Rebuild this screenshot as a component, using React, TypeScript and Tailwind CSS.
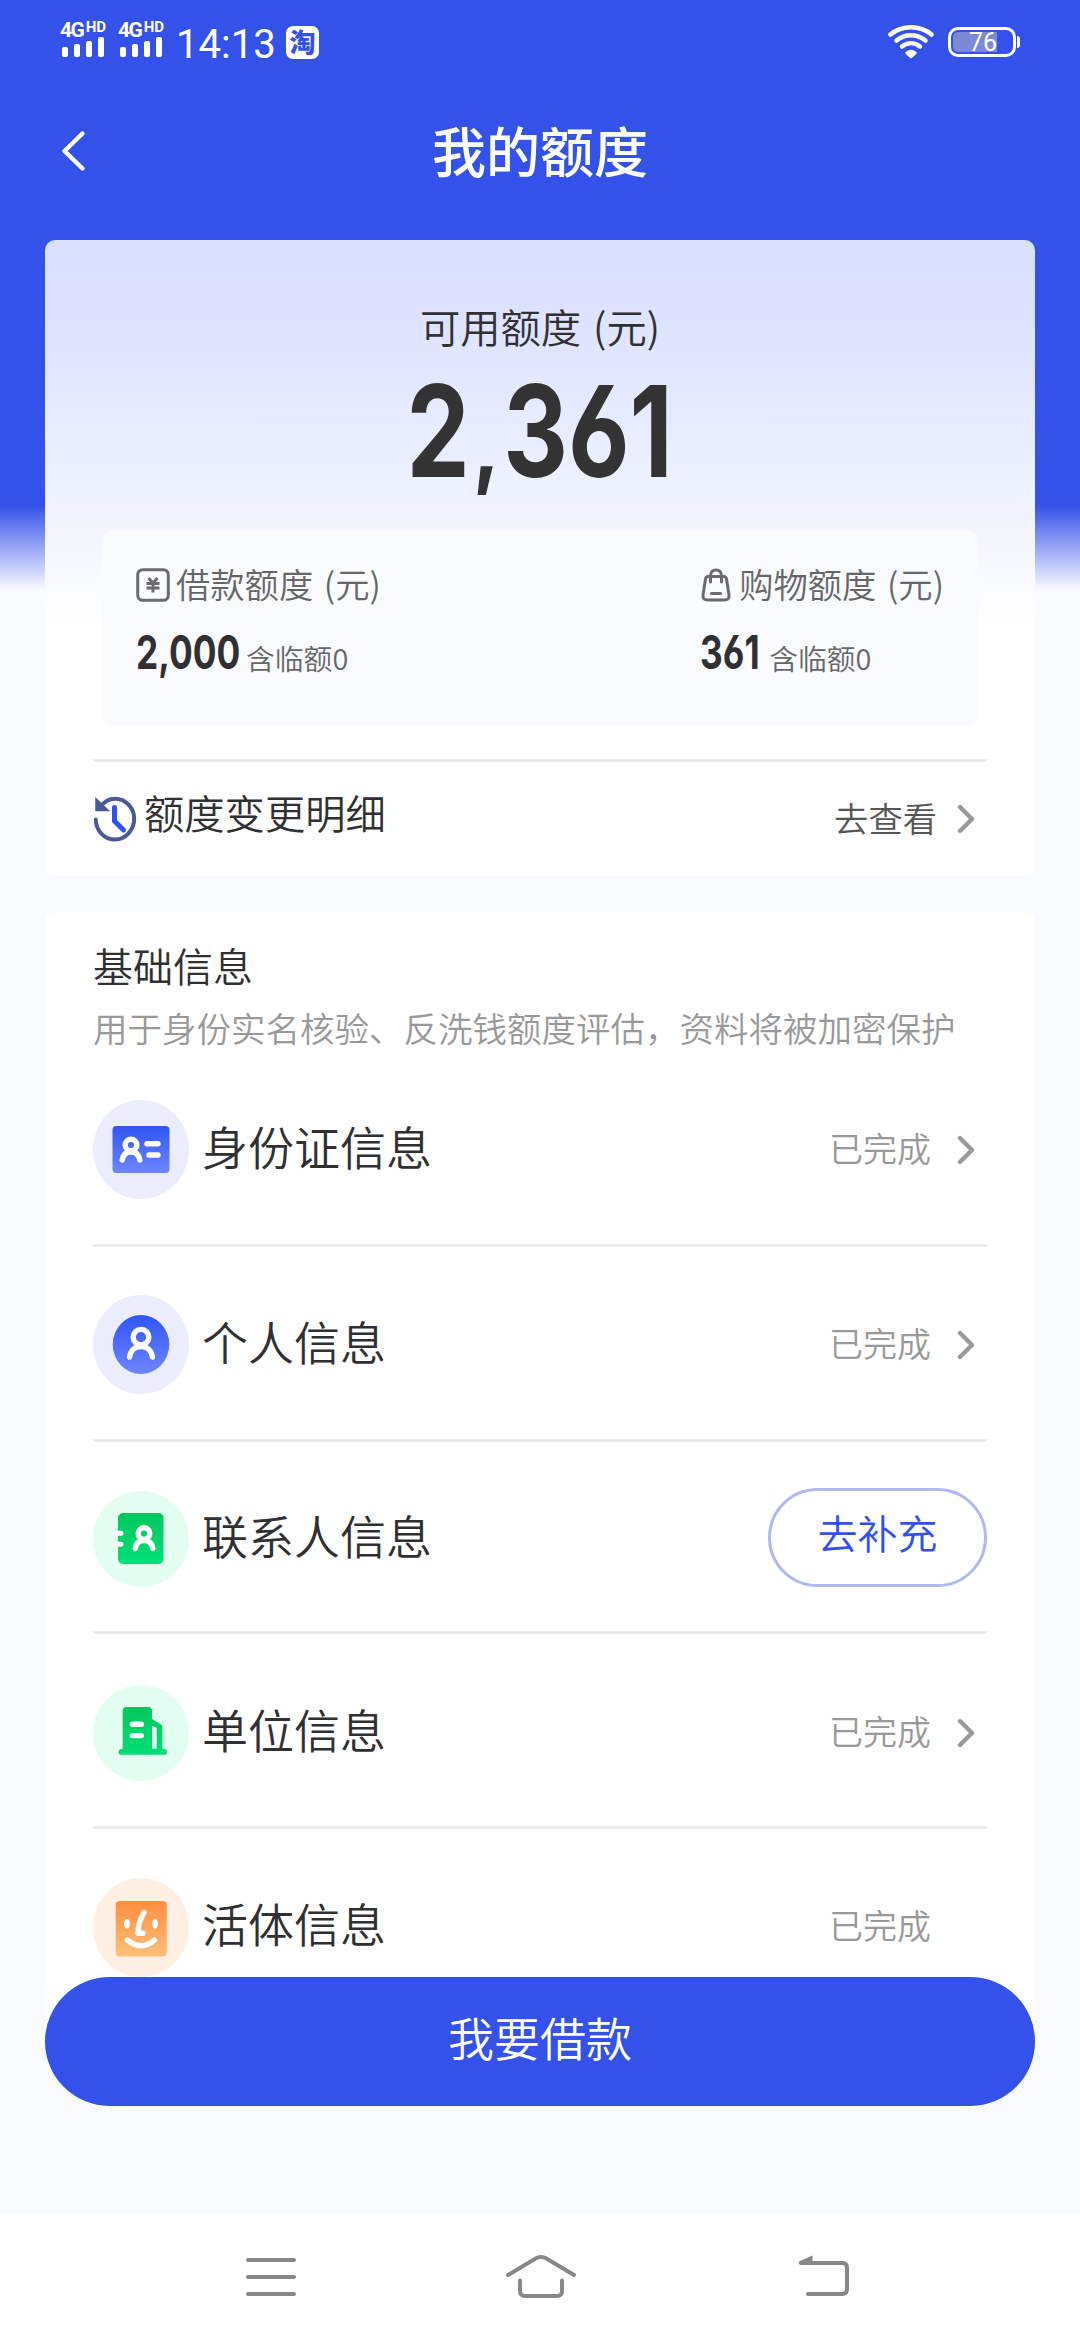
import type { ReactNode } from "react";

const FONT = "font-['Noto_Sans_CJK_SC',sans-serif]";

function Person({ x, y }: { x: number; y: number }) {
  return (
    <g
      transform={`translate(${x} ${y})`}
      fill="none"
      stroke="#fff"
      strokeWidth="5.4"
      strokeLinecap="round"
    >
      <circle r="5.8" />
      <path d="M-8.8 15C-8 9.5-4.5 7 0 7s8 2.5 8.800 8" />
    </g>
  );
}

function Defs({ id, from, to }: { id: string; from: string; to: string }) {
  return (
    <defs>
      <linearGradient id={id} x1="0" y1="0" x2="0" y2="1">
        <stop offset="0" stopColor={from} />
        <stop offset="1" stopColor={to} />
      </linearGradient>
    </defs>
  );
}

function IdCardIcon() {
  return (
    <svg width="96" height="99" viewBox="0 0 96 99">
      <Defs id="id-card" from="#2f55f3" to="#6e85fe" />
      <ellipse cx="48" cy="49.5" rx="48" ry="49.5" fill="#ebedfd" />
      <rect x="19.5" y="26" width="57" height="47" rx="4" fill="url(#id-card)" />
      <Person x={38} y={45} />
      <path
        d="M54 43.800h11M56 55h9"
        stroke="#fff"
        strokeWidth="5.400"
        strokeLinecap="round"
      />
    </svg>
  );
}

function ProfileIcon() {
  return (
    <svg width="96" height="99" viewBox="0 0 96 99">
      <Defs id="profile" from="#2f55f3" to="#6e85fe" />
      <ellipse cx="48" cy="49.5" rx="48" ry="49.5" fill="#ebedfd" />
      <ellipse cx="48" cy="49.5" rx="28.3" ry="29.5" fill="url(#profile)" />
      <g fill="none" stroke="#fff" strokeWidth="5.400" strokeLinecap="round">
        <circle cx="48" cy="42.2" r="7.8" />
        <path d="M36.600 62C37.500 55.500 42 51.500 48 51.500s10.500 4 11.400 10.500" />
      </g>
    </svg>
  );
}

function ContactIcon() {
  return (
    <svg width="96" height="96" viewBox="0 0 96 96">
      <Defs id="contact" from="#02c75c" to="#00e17a" />
      <circle cx="48" cy="48" r="48" fill="#e3fdf0" />
      <rect x="25" y="22" width="45.500" height="51" rx="5" fill="url(#contact)" />
      <path
        d="M22 42.300h6M22 53.300h6"
        stroke="#fff"
        strokeWidth="5"
        strokeLinecap="round"
      />
      <Person x={51} y={42.5} />
    </svg>
  );
}

function CompanyIcon() {
  return (
    <svg width="96" height="96" viewBox="0 0 96 96">
      <Defs id="company" from="#02c75c" to="#00dd76" />
      <circle cx="48" cy="48" r="48" fill="#e3fdf0" />
      <path
        fill="url(#company)"
        fillRule="evenodd"
        d="M33.500 22H55a4 4 0 0 1 4 4v8l8.500 5.200Q69.300 40.300 69.300 42.500V64H71a2.900 2.900 0 0 1 0 5.800H28.500a2.900 2.900 0 0 1 0-5.800h1.200V26a4 4 0 0 1 3.800-4zM59 41v22.700h4.700V43.500q0-1-1-1.500z"
      />
      <path
        d="M39.300 39.200h9M39.300 50.600h9"
        stroke="#fff"
        strokeWidth="5.400"
        strokeLinecap="round"
      />
    </svg>
  );
}

function FaceIcon() {
  return (
    <svg width="96" height="99" viewBox="0 0 96 99">
      <Defs id="face" from="#ff8e3f" to="#ffc078" />
      <ellipse cx="48" cy="49.5" rx="48" ry="49.5" fill="#fdefe2" />
      <rect x="22.700" y="23" width="51" height="55.500" rx="4" fill="url(#face)" />
      <ellipse cx="34" cy="45.700" rx="2.800" ry="4.700" fill="#fff" />
      <ellipse cx="62" cy="45.700" rx="2.800" ry="4.700" fill="#fff" />
      <g
        fill="none"
        stroke="#fff"
        strokeWidth="5.400"
        strokeLinecap="round"
        strokeLinejoin="round"
      >
        <path d="M51 34.500Q45 45 45 55.300h5" />
        <path d="M34.500 62Q48 73.500 61.500 62" />
      </g>
    </svg>
  );
}

function ChevronRight() {
  return (
    <svg width="18" height="30" viewBox="0 0 18 30" fill="none">
      <path
        d="M3 3 15 15 3 27"
        stroke="#999"
        strokeWidth="4.400"
        strokeLinecap="round"
        strokeLinejoin="round"
      />
    </svg>
  );
}

function Signal() {
  return (
    <div className="flex w-[46px] flex-col">
      <div className="flex h-4 items-start justify-between whitespace-nowrap font-['Roboto',sans-serif] font-bold text-white">
        <span className="w-[23px] text-[21px] leading-[18px] tracking-[-1.5px]">4G</span>
        <span className="text-[15px] leading-[12px]">HD</span>
      </div>
      <svg width="46" height="20" viewBox="0 0 46 20" fill="#fff">
        <rect x="2" y="10" width="6" height="10" rx="2" />
        <rect x="14" y="7" width="6" height="13" rx="2" />
        <rect x="26" y="4" width="6" height="16" rx="2" />
        <rect x="38" y="0" width="6" height="20" rx="2" />
      </svg>
    </div>
  );
}

function StatusBar() {
  return (
    <div className="flex h-[84px] items-start justify-between pl-[60px] pr-[60px] pt-[21px] text-white">
      <div className="flex items-start">
        <Signal />
        <div className="w-3" />
        <Signal />
        <span className="ml-[12px] mt-[4px] w-[104px] font-['Roboto',sans-serif] text-[40px] leading-[40px]">
          14:13
        </span>
        <span className="ml-[6px] mt-[5px] flex size-[33px] items-center justify-center rounded-[7px] bg-white text-[26px] font-black leading-[30px] text-[#3451ea]">
          <span className="mb-[4px]">淘</span>
        </span>
      </div>
      <div className="flex items-start">
        <svg className="mt-[4px]" width="46" height="34" viewBox="0 0 46 34" fill="none">
          <g stroke="#fff" strokeWidth="4.500" strokeLinecap="round">
            <path d="M2.500 9.500C14-.2 32-.2 43.500 9.500" />
            <path d="M8.500 15.500C17 8.500 29 8.500 37.500 15.500" />
            <path d="M14 21.500c5.500-4.200 12.500-4.200 18 0" />
          </g>
          <path d="M17 27.500Q23 22 29 27.500 28 30 23 33.500 18 30 17 27.500z" fill="#fff" />
        </svg>
        <div className="ml-[14px] mt-[6px] flex items-center">
          <div className="flex h-[30px] w-[68px] items-center rounded-[10px] border-[3px] border-white pl-[2px]">
            <div className="flex h-5 w-[44px] items-center justify-end rounded-l-[5px] bg-[#7b89d6] pt-[2px] font-['Roboto',sans-serif] text-[25px] leading-5">
              76
            </div>
          </div>
          <div className="ml-px h-[12px] w-[3px] rounded-r-[3px] bg-white" />
        </div>
      </div>
    </div>
  );
}

function Header() {
  return (
    <header className="grid h-[156px] grid-cols-[200px_1fr_200px] items-start">
      <svg className="ml-[60px] mt-[46px]" width="28" height="42" viewBox="0 0 28 42" fill="none">
        <path
          d="M22.500 3.500 4.500 21l18 17.500"
          stroke="#fff"
          strokeWidth="4.400"
          strokeLinecap="round"
          strokeLinejoin="round"
        />
      </svg>
      <h1 className="mt-[36px] text-center text-[54px] font-medium leading-[60px] text-white">
        我的额度
      </h1>
    </header>
  );
}

function YuanIcon() {
  return (
    <svg width="34" height="34" viewBox="0 0 34 34" fill="none" stroke="#6b6b6b">
      <rect x="1.700" y="1.700" width="30.600" height="30.600" rx="5" strokeWidth="3" />
      <path
        d="M12.500 10l4.500 5 4.500-5M10.500 15.500h13M10.500 20h13M17 15v9.500"
        strokeWidth="3"
      />
    </svg>
  );
}

function BagIcon() {
  return (
    <svg
      width="33"
      height="34"
      viewBox="-1 0 33 34"
      fill="none"
      stroke="#6b6b6b"
      strokeWidth="3"
      strokeLinecap="round"
    >
      <path d="M7 8.500h16Q25 8.500 25.500 11l2.500 16q.6 5-4.500 5h-17q-5 0-4.500-5L4.500 11Q5 8.500 7 8.500z" />
      <path d="M9.500 14V7.500Q10 2 15 2t5.500 5.500V14M10.500 25.500h9" />
    </svg>
  );
}

function QuotaItem({
  icon,
  label,
  amount,
  amountClass,
}: {
  icon: ReactNode;
  label: string;
  amount: string;
  amountClass: string;
}) {
  return (
    <div>
      <div className="flex h-[46px] items-center">
        {icon}
        <span className="mb-[4px] ml-[6px] whitespace-nowrap text-[34.300px] font-[350] leading-[46px] text-[#666] [word-spacing:3px]">
          {label}
        </span>
      </div>
      <div className="mt-[19px] flex h-[50px] items-baseline">
        <span className={amountClass}>
          <span className="inline-block origin-left scale-x-[0.75] font-['Inter',sans-serif] text-[47px] font-bold leading-[50px] text-[#303033] [font-feature-settings:'cv03']">
            {amount}
          </span>
        </span>
        <span className="relative top-px text-[28.800px] font-[350] text-[#666]">含临额0</span>
      </div>
    </div>
  );
}

function QuotaCard() {
  return (
    <section className="mx-[45px] h-[636px] rounded-[10px] bg-[linear-gradient(to_bottom,#d8dfff_0px,#dde2ff_70px,#eff2ff_260px,#ffffff_385px)] px-[48px]">
      <p className="pt-[58px] text-center text-[40.300px] font-[350] leading-[56px] text-[#303033] [word-spacing:3px]">
        可用额度 (元)
      </p>
      <p className="flex h-[132px] justify-center pt-[12px]">
        <span className="inline-block scale-x-[0.79] whitespace-nowrap font-['Inter',sans-serif] text-[127px] font-bold leading-[130px] text-[#333] [font-feature-settings:'cv03']">
          2<span className="mx-[5px] text-[92px] font-extrabold leading-none">,</span>361
        </span>
      </p>
      <div className="mx-[9px] mt-[45px] flex h-[194px] justify-between rounded-[10px] bg-[#fafbff] pl-[34px] pr-[34px] pt-[31px]">
        <QuotaItem
          icon={<YuanIcon />}
          label="借款额度 (元)"
          amount="2,000"
          amountClass="w-[110px]"
        />
        <QuotaItem
          icon={<BagIcon />}
          label="购物额度 (元)"
          amount="361"
          amountClass="w-[69px]"
        />
      </div>
      <div className="mt-[34px] h-[3px] bg-[#ebebeb]" />
      <div className="flex h-[114px] items-center">
        <svg width="44" height="46" viewBox="0 0 44 46" fill="none">
          <path
            d="M2.800 23.500C3 35 11.500 43.500 22 43.500S41.200 34 41.200 22.800 32.500 2.800 22 2.800c-6 0-11 3-14.500 8.200"
            stroke="#4a5a92"
            strokeWidth="4"
            strokeLinecap="round"
          />
          <path d="M3.500 4v10h10.500z" fill="#4a5a92" stroke="#4a5a92" strokeWidth="2.500" />
          <path
            d="M21.500 11.500V25l9 9"
            stroke="#3450f0"
            strokeWidth="5"
            strokeLinecap="round"
          />
        </svg>
        <span className="mb-[14px] ml-[7px] text-[40.300px] font-[350] leading-[56px] text-[#303033]">
          额度变更明细
        </span>
        <span className="mb-[4px] ml-auto mr-[20px] text-[34.300px] font-[350] leading-[48px] text-[#555]">
          去查看
        </span>
        <div className="mr-[12px]">
          <ChevronRight />
        </div>
      </div>
    </section>
  );
}

type InfoRow = {
  title: string;
  icon: ReactNode;
  status: "done" | "todo";
  arrow?: boolean;
  className: string;
};

const ROWS: InfoRow[] = [
  {
    title: "身份证信息",
    icon: <IdCardIcon />,
    status: "done",
    arrow: true,
    className: "h-[193px] border-b-[3px] pt-px",
  },
  {
    title: "个人信息",
    icon: <ProfileIcon />,
    status: "done",
    arrow: true,
    className: "h-[195px] border-b-[3px] pt-[3px]",
  },
  {
    title: "联系人信息",
    icon: <ContactIcon />,
    status: "todo",
    className: "h-[192px] border-b-[3px] pt-[4px]",
  },
  {
    title: "单位信息",
    icon: <CompanyIcon />,
    status: "done",
    arrow: true,
    className: "h-[195px] border-b-[3px] pt-[6px]",
  },
  {
    title: "活体信息",
    icon: <FaceIcon />,
    status: "done",
    className: "h-[196px]",
  },
];

function InfoCard() {
  return (
    <section className="mx-[45px] mt-[36px] h-[1125px] overflow-hidden rounded-t-[10px] bg-white px-[48px]">
      <h2 className="pt-[25px] text-[40px] font-[350] leading-[56px] text-[#303033]">
        基础信息
      </h2>
      <p className="mt-[10px] whitespace-nowrap text-[34.500px] font-[350] leading-[48px] text-[#999]">
        用于身份实名核验、反洗钱额度评估，资料将被加密保护
      </p>
      <ul className="mt-[3px]">
        {ROWS.map((row) => (
          <li
            key={row.title}
            className={`flex items-center border-[#ebebeb] ${row.className}`}
          >
            {row.icon}
            <span className="mb-[10px] ml-[13px] text-[46px] font-[350] leading-[60px] text-[#303033]">
              {row.title}
            </span>
            {row.status === "done" ? (
              <>
                <span className="mb-[4px] ml-auto mr-[26px] text-[34px] font-[350] leading-[48px] text-[#999]">
                  已完成
                </span>
                <div className="mr-[12px] w-[18px]">{row.arrow && <ChevronRight />}</div>
              </>
            ) : (
              <button
                type="button"
                className="mb-[3px] ml-auto h-[99px] w-[219px] rounded-full border-[3px] border-[#afb8ef] pb-[10px] text-[40px] font-[350] leading-[56px] text-[#3450e8]"
              >
                去补充
              </button>
            )}
          </li>
        ))}
      </ul>
    </section>
  );
}

function NavBar() {
  return (
    <nav className="absolute inset-x-0 bottom-0 flex h-[126px] items-center bg-white pl-[246px]">
      <svg width="50" height="44" viewBox="0 0 50 44" stroke="#888" strokeWidth="4" strokeLinecap="round">
        <path d="M2 5h46M2 22h46M2 39h46" />
      </svg>
      <svg
        className="ml-[210px]"
        width="70"
        height="44"
        viewBox="0 0 70 44"
        fill="none"
        stroke="#888"
        strokeWidth="4"
        strokeLinecap="round"
      >
        <path d="M2 20 30 3.200q5-2.400 10 0L68 20" />
        <path d="M14 25.500V36q0 5 5 5h32q5 0 5-5V25.500" />
      </svg>
      <svg
        className="ml-[222px]"
        width="52"
        height="44"
        viewBox="0 0 52 44"
        fill="none"
        stroke="#888"
        strokeWidth="4"
        strokeLinecap="round"
      >
        <path d="M3 8h41q5 0 5 5v21q0 5-5 5H10" />
        <path d="M14.500.5V9.500H2.500Q-1 8.500 2 6z" fill="#888" stroke="none" />
      </svg>
    </nav>
  );
}

export default function App() {
  return (
    <div
      className={`relative h-[2340px] w-[1080px] overflow-hidden bg-[linear-gradient(to_bottom,#3451ea_505px,#fafbff_590px)] ${FONT}`}
    >
      <StatusBar />
      <Header />
      <QuotaCard />
      <InfoCard />
      <button
        type="button"
        className="absolute inset-x-[45px] top-[1977px] h-[129px] rounded-full bg-[#3451ea] pb-[12px] text-[46px] font-[350] leading-[60px] text-white"
      >
        我要借款
      </button>
      <NavBar />
    </div>
  );
}
